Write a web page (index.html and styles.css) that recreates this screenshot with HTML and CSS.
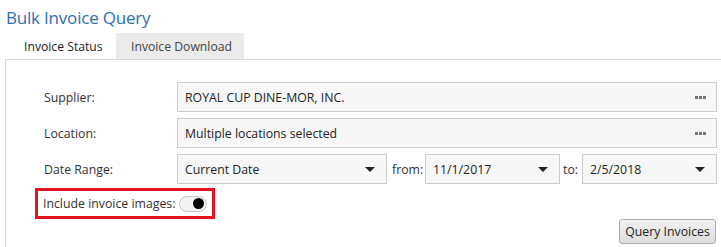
FILE: index.html
```html
<!DOCTYPE html>
<html>
<head>
<meta charset="utf-8">
<link rel="stylesheet" href="styles.css">
</head>
<body>
<h1 class="title">Bulk Invoice Query</h1>
<div class="tabs">
  <div class="tab tab-active">Invoice Status</div>
  <div class="tab">Invoice Download</div>
</div>
<div class="panel">
  <div class="row">
    <div class="label">Supplier:</div>
    <div class="field picker"><span>ROYAL CUP DINE-MOR, INC.</span><span class="dots"><i></i><i></i><i></i></span></div>
  </div>
  <div class="row">
    <div class="label">Location:</div>
    <div class="field picker"><span>Multiple locations selected</span><span class="dots"><i></i><i></i><i></i></span></div>
  </div>
  <div class="row">
    <div class="label">Date Range:</div>
    <div class="field select sel-range"><span>Current Date</span><span class="caret"></span></div>
    <div class="inline-label lbl-from">from:</div>
    <div class="field select sel-from"><span>11/1/2017</span><span class="caret"></span></div>
    <div class="inline-label lbl-to">to:</div>
    <div class="field select sel-to"><span>2/5/2018</span><span class="caret"></span></div>
  </div>
  <div class="include">
    <span class="include-text">Include invoice images:</span>
    <span class="toggle"><span class="knob"></span></span>
  </div>
  <div class="actions">
    <button class="btn">Query Invoices</button>
  </div>
</div>
</body>
</html>
```
FILE: styles.css
```css
* { box-sizing: border-box; }
body {
  margin: 0;
  font-family: "Open Sans", "Noto Sans", sans-serif;
  font-size: 12.3px;
  color: #333;
  background: #fff;
  overflow: hidden;
}
.title {
  margin: 0;
  padding: 6px 0 0 6px;
  height: 33px;
  font-size: 17px;
  font-weight: 400;
  color: #2d6eb3;
  line-height: 24px;
  letter-spacing: -0.2px;
}
.tabs {
  display: flex;
  padding-left: 6px;
  height: 26px;
}
.tab {
  display: flex;
  align-items: center;
  height: 26px;
  font-size: 12.2px;
  color: #444;
}
.tab-active {
  width: 110px;
  padding-left: 18px;
  background: #fff;
  color: #222;
}
.tab:not(.tab-active) {
  width: 128px;
  padding-left: 15px;
  background: #ebebeb;
}
.panel {
  margin-left: 5px;
  border-top: 1px solid #dcdcdc;
  border-left: 1px solid #dcdcdc;
  padding: 22px 4px 0 38px;
  height: 200px;
}
.row {
  display: flex;
  align-items: center;
  height: 30px;
  margin-bottom: 6px;
}
.label {
  width: 133px;
  flex: none;
}
.field {
  height: 30px;
  border: 1px solid #ccc;
  background: #f7f7f7;
  display: flex;
  align-items: center;
  justify-content: space-between;
  padding: 0 7px 0 7px;
  color: #222;
}
.picker { flex: 1; }
.dots {
  display: flex;
  gap: 1px;
  margin-right: 3px;
}
.dots i {
  width: 3px;
  height: 3px;
  background: #777;
  display: block;
}
.caret {
  width: 0;
  height: 0;
  border-left: 5px solid transparent;
  border-right: 5px solid transparent;
  border-top: 5px solid #222;
  margin-right: 4px;
}
.sel-range { width: 210px; flex: none; }
.sel-from { width: 135px; flex: none; }
.sel-to { flex: 1; }
.inline-label {
  flex: none;
  padding-left: 5px;
}
.lbl-from { width: 38px; }
.lbl-to { width: 22px; padding-left: 3px; }
.include {
  display: inline-flex;
  align-items: center;
  margin-left: -9px;
  margin-top: -2px;
  height: 31px;
  border: 3px solid #e3141f;
  padding: 0 5px 0 5px;
}
.include-text { margin-right: 4px; }
.toggle {
  width: 28px;
  height: 16px;
  border: 1px solid #c8c8c8;
  border-radius: 8px;
  background: #f2f2f2;
  display: flex;
  align-items: center;
  justify-content: flex-end;
  padding-right: 2px;
}
.knob {
  width: 11px;
  height: 11px;
  border-radius: 50%;
  background: #000;
}
.actions {
  display: flex;
  justify-content: flex-end;
  margin-top: 0;
  padding-right: 1px;
}
.btn {
  font-family: inherit;
  font-size: 12.3px;
  color: #222;
  height: 25px;
  width: 97px;
  padding: 0;
  border: 1px solid #adadad;
  border-radius: 3px;
  background: linear-gradient(#f2f2f2, #dedede);
}
```
